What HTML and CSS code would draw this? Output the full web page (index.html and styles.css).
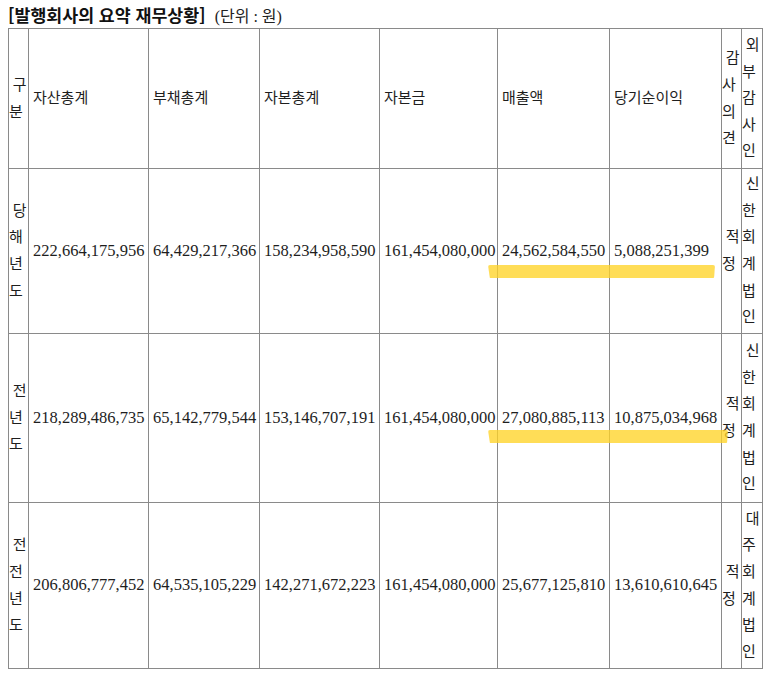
FILE: index.html
```html
<!DOCTYPE html>
<html lang="ko">
<head>
<meta charset="utf-8">
<title>발행회사의 요약 재무상황</title>
<link rel="stylesheet" href="styles.css">
</head>
<body>
<h1 class="title">[발행회사의 요약 재무상황]<span class="unit">(단위 : 원)</span></h1>
<div class="wrap">
  <table class="fin">
    <colgroup>
      <col class="w20"><col class="w120"><col class="w111"><col class="w120"><col class="w118"><col class="w112"><col class="w112"><col class="w20"><col class="w21">
    </colgroup>
    <tr class="r-head">
      <td class="v ko">&nbsp;구분</td>
      <td class="ko">자산총계</td>
      <td class="ko">부채총계</td>
      <td class="ko">자본총계</td>
      <td class="ko">자본금</td>
      <td class="ko">매출액</td>
      <td class="ko">당기순이익</td>
      <td class="v ko">&nbsp;감사의견</td>
      <td class="v ko">&nbsp;외부감사인</td>
    </tr>
    <tr class="r-1">
      <td class="v ko">&nbsp;당해년도</td>
      <td>222,664,175,956</td>
      <td>64,429,217,366</td>
      <td>158,234,958,590</td>
      <td>161,454,080,000</td>
      <td>24,562,584,550</td>
      <td>5,088,251,399</td>
      <td class="v ko">&nbsp;적정</td>
      <td class="v ko">&nbsp;신한회계법인</td>
    </tr>
    <tr class="r-2">
      <td class="v ko">&nbsp;전년도</td>
      <td>218,289,486,735</td>
      <td>65,142,779,544</td>
      <td>153,146,707,191</td>
      <td>161,454,080,000</td>
      <td>27,080,885,113</td>
      <td>10,875,034,968</td>
      <td class="v ko">&nbsp;적정</td>
      <td class="v ko">&nbsp;신한회계법인</td>
    </tr>
    <tr class="r-3">
      <td class="v ko">&nbsp;전전년도</td>
      <td>206,806,777,452</td>
      <td>64,535,105,229</td>
      <td>142,271,672,223</td>
      <td>161,454,080,000</td>
      <td>25,677,125,810</td>
      <td>13,610,610,645</td>
      <td class="v ko">&nbsp;적정</td>
      <td class="v ko">&nbsp;대주회계법인</td>
    </tr>
  </table>
  <div class="mark mark-1"></div>
  <div class="mark mark-2"></div>
</div>
</body>
</html>
```
FILE: styles.css
```css
html, body {
  margin: 0;
  background: #ffffff;
}
body {
  padding: 0 8px;
}
.title {
  margin: 0;
  height: 28px;
  box-sizing: border-box;
  padding-top: 5px;
  line-height: 20px;
  font-family: "Noto Sans CJK KR", "Noto Sans", sans-serif;
  font-size: 17.3px;
  font-weight: 700;
  color: #111111;
  white-space: nowrap;
}
.unit {
  font-family: "Liberation Serif", "Noto Sans CJK KR", sans-serif;
  font-weight: 400;
  font-size: 16px;
  margin-left: 9px;
  color: #222222;
}
.wrap {
  position: relative;
  width: 754px;
}
.fin {
  border-collapse: collapse;
  table-layout: fixed;
  width: 754px;
  font-family: "Liberation Serif", "Noto Sans CJK KR", serif;
  font-size: 16.5px;
  color: #1e1e1e;
}
.w20 { width: 20px; }
.w21 { width: 21px; }
.w111 { width: 111px; }
.w112 { width: 112px; }
.w118 { width: 118px; }
.w120 { width: 120px; }
.fin td {
  border: 1px solid #8a8a8a;
  padding: 1px 4px;
  vertical-align: middle;
  text-align: left;
  line-height: 26.6px;
  white-space: nowrap;
  overflow: visible;
}
.fin td.ko {
  font-family: "Liberation Serif", "Noto Sans CJK KR", sans-serif;
  font-size: 15px;
}
.fin td.v {
  padding: 1px 0;
  white-space: normal;
}
.r-head { height: 140px; }
.r-1 { height: 165px; }
.r-2 { height: 169px; }
.r-3 { height: 166px; }
.mark {
  position: absolute;
  background: rgba(255, 212, 40, 0.78);
  border-radius: 2px;
  clip-path: polygon(0 0, 100% 0, 99.6% 100%, 0.8% 100%);
}
.mark-1 {
  left: 480px;
  top: 237px;
  width: 227px;
  height: 13px;
}
.mark-2 {
  left: 480px;
  top: 402px;
  width: 240px;
  height: 13px;
}
```
